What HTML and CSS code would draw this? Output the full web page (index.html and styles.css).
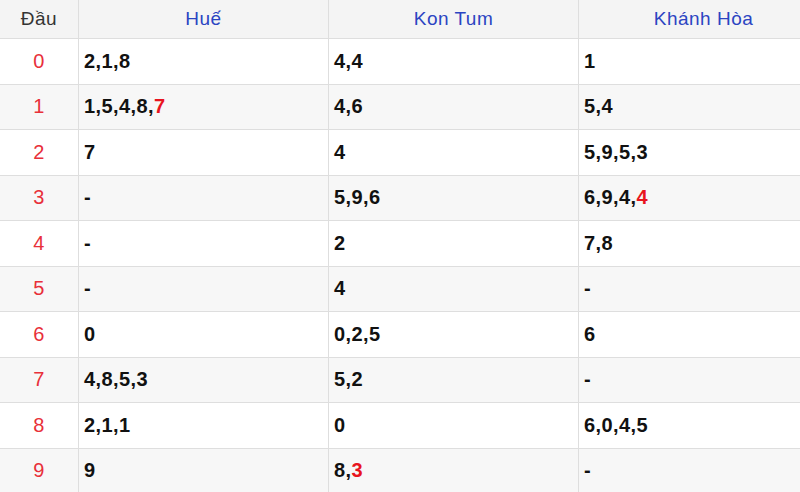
FILE: index.html
```html
<!DOCTYPE html>
<html lang="vi">
<head>
<meta charset="utf-8">
<title>Lô tô</title>
<link rel="stylesheet" href="styles.css">
</head>
<body>
<table class="loto">
<colgroup><col class="c-dau"><col class="c-prov"><col class="c-prov"><col class="c-prov"></colgroup>
<thead>
<tr><th class="h-dau">Đầu</th><th>Huế</th><th>Kon Tum</th><th>Khánh Hòa</th></tr>
</thead>
<tbody>
<tr><td class="dau">0</td><td>2,1,8</td><td>4,4</td><td>1</td></tr>
<tr><td class="dau">1</td><td>1,5,4,8,<span class="hl">7</span></td><td>4,6</td><td>5,4</td></tr>
<tr><td class="dau">2</td><td>7</td><td>4</td><td>5,9,5,3</td></tr>
<tr><td class="dau">3</td><td>-</td><td>5,9,6</td><td>6,9,4,<span class="hl">4</span></td></tr>
<tr><td class="dau">4</td><td>-</td><td>2</td><td>7,8</td></tr>
<tr><td class="dau">5</td><td>-</td><td>4</td><td>-</td></tr>
<tr><td class="dau">6</td><td>0</td><td>0,2,5</td><td>6</td></tr>
<tr><td class="dau">7</td><td>4,8,5,3</td><td>5,2</td><td>-</td></tr>
<tr><td class="dau">8</td><td>2,1,1</td><td>0</td><td>6,0,4,5</td></tr>
<tr><td class="dau">9</td><td>9</td><td>8,<span class="hl">3</span></td><td>-</td></tr>
</tbody>
</table>
</body>
</html>
```
FILE: styles.css
```css
html, body {
  margin: 0;
  padding: 0;
  background: #fff;
  overflow: hidden;
}
.loto {
  border-collapse: collapse;
  table-layout: fixed;
  width: 828px;
  font-family: "Liberation Sans", Arial, sans-serif;
  margin-top: -1px;
  margin-left: -1px;
}
.c-dau { width: 79px; }
.c-prov { width: 250px; }
.loto th, .loto td {
  border: 1px solid #dedede;
  padding: 0 5px;
  vertical-align: middle;
}
.loto th {
  height: 38px;
  background: #f4f4f4;
  color: #2b44c2;
  font-weight: normal;
  font-size: 19px;
  letter-spacing: 0.5px;
  text-align: center;
}
.loto th.h-dau { color: #333; }
.loto td {
  height: 44.5px;
  font-size: 20px;
  letter-spacing: 0.4px;
  font-weight: bold;
  color: #111;
}
.loto td.dau {
  text-align: center;
  font-weight: normal;
  color: #e8303a;
}
.loto tbody tr:nth-child(even) td { background: #f7f7f7; }
.hl { color: #e8141e; }
```
